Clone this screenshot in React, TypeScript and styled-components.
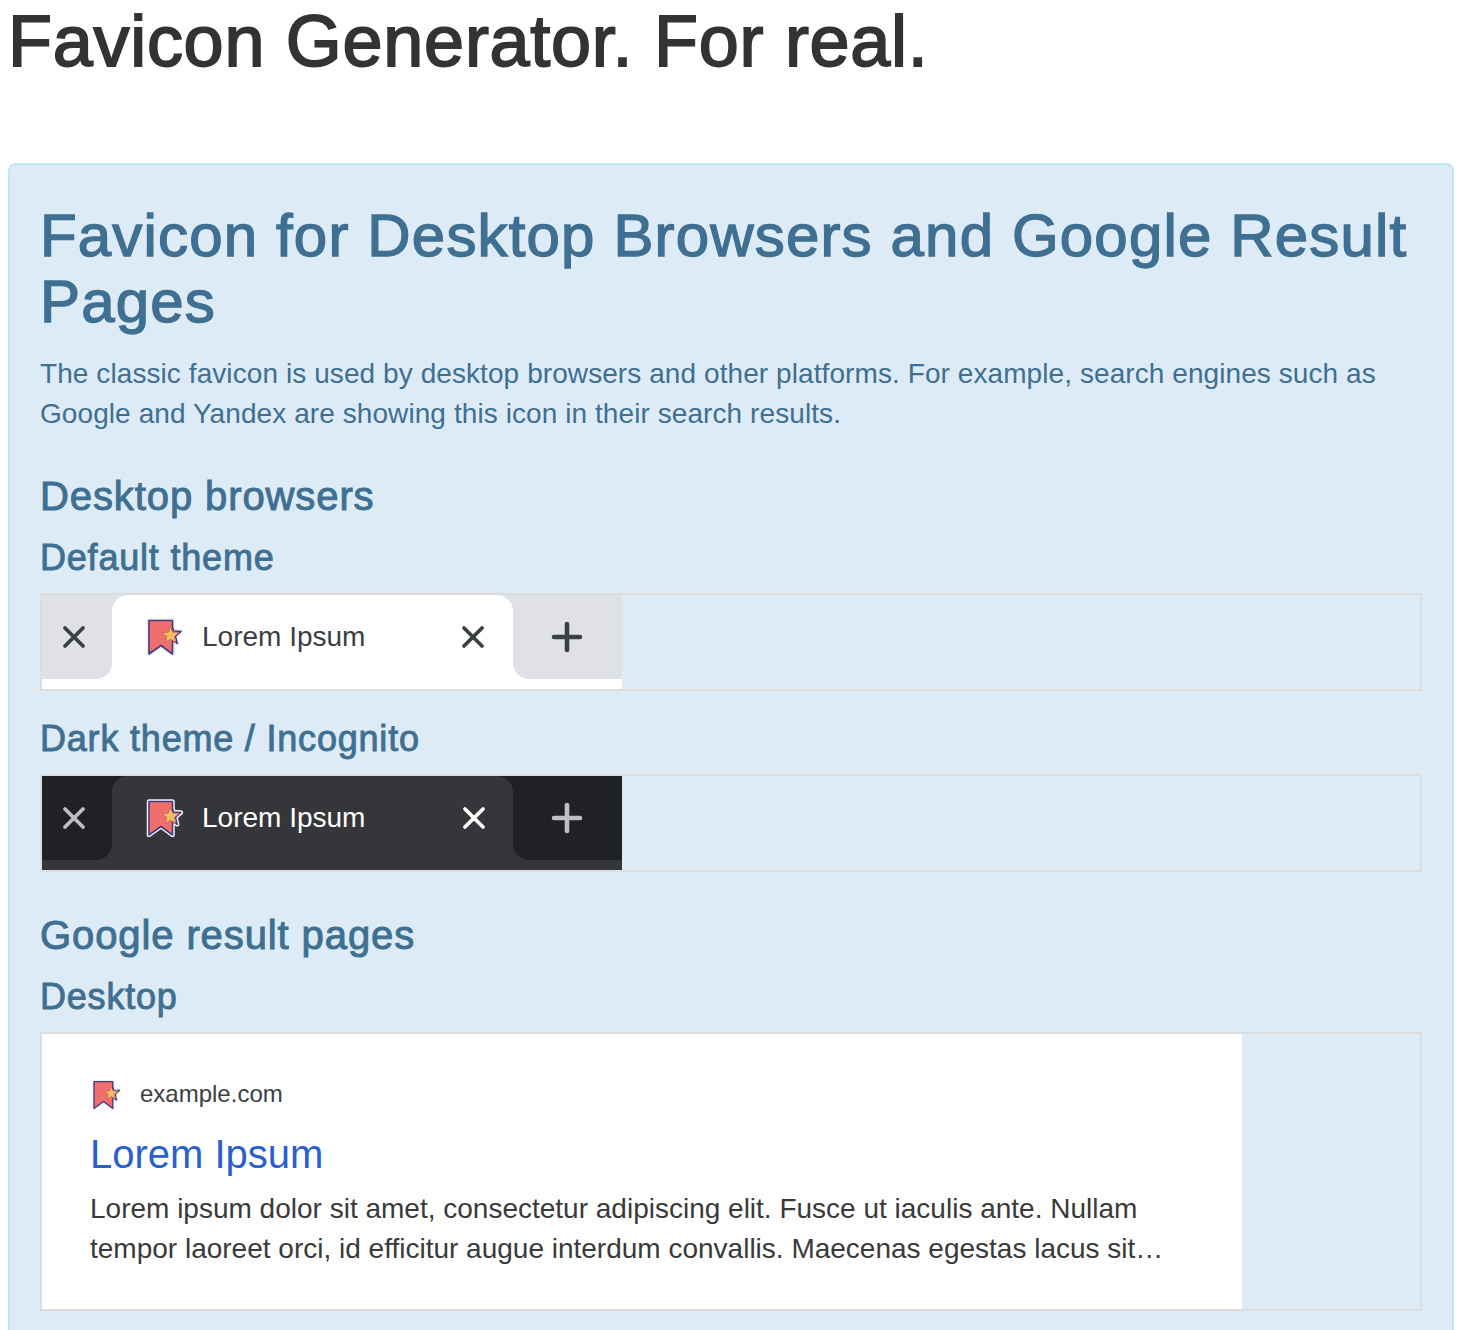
import React from "react";
import styled, { createGlobalStyle } from "styled-components";

const Global = createGlobalStyle`
  html, body { margin: 0; height: 1330px; overflow: hidden; background: #fff; }
  body { font-family: "Liberation Sans", Arial, sans-serif; font-size: 28px; line-height: 40px; color: #333; }
`;

const Page = styled.div`
  padding: 0 4px 0 8px;
`;

const Title = styled.h1`
  margin: 0 0 82px;
  padding-top: 1px;
  font-size: 72px;
  line-height: 80px;
  font-weight: 400;
  color: #333;
  letter-spacing: 0.72px;
  -webkit-text-stroke: 1.8px #333;
`;

const Panel = styled.section`
  border: 2px solid #bce8f1;
  border-radius: 8px;
  background: #ddebf7;
  padding: 38px 30px 80px;
  color: #3f6f91;
`;

const Heading = styled.h2`
  margin: 0 0 19px;
  font-size: 60px;
  line-height: 66px;
  font-weight: 400;
  letter-spacing: 1.16px;
  -webkit-text-stroke: 1.4px #3f6f91;
`;

const Lead = styled.p`
  margin: 0 0 40px;
  letter-spacing: 0.08px;
`;

const SubHeading = styled.h3`
  margin: 0 0 20px;
  font-size: 40px;
  line-height: 44px;
  font-weight: 400;
  letter-spacing: 0.9px;
  -webkit-text-stroke: 1px #3f6f91;
`;

const ThemeHeading = styled.h4`
  margin: 0 0 15px;
  font-size: 36px;
  line-height: 40px;
  font-weight: 400;
  letter-spacing: 0.8px;
  -webkit-text-stroke: 0.9px #3f6f91;
`;

const Frame = styled.div<{ $gap?: number }>`
  border: 2px solid #dddddd;
  margin-bottom: ${(p) => p.$gap ?? 28}px;
`;

const TabStrip = styled.div<{ $dark?: boolean }>`
  display: flex;
  width: 580px;
  height: 94px;
  background: ${(p) => (p.$dark ? "#35363a" : "#fff")};
`;

const Side = styled.div<{ $dark?: boolean; $right?: boolean }>`
  height: 84px;
  width: ${(p) => (p.$right ? 109 : 70)}px;
  display: flex;
  align-items: center;
  justify-content: center;
  padding-right: ${(p) => (p.$right ? 2 : 6)}px;
  box-sizing: border-box;
  background: ${(p) => (p.$dark ? "#202124" : "#dfe1e6")};
  border-radius: ${(p) => (p.$right ? "0 0 0 16px" : "0 0 16px 0")};
  color: ${(p) => (p.$dark ? "#bdbfc3" : "#3c4043")};
`;

const TabSlot = styled.div<{ $dark?: boolean }>`
  width: 401px;
  height: 94px;
  background: ${(p) => (p.$dark ? "#202124" : "#dfe1e6")};
`;

const ActiveTab = styled.div<{ $dark?: boolean }>`
  height: 100%;
  box-sizing: border-box;
  display: flex;
  align-items: flex-start;
  padding: 21px ${(p) => (p.$dark ? 27 : 28)}px 0 32px;
  border-radius: 16px 16px 0 0;
  background: ${(p) => (p.$dark ? "#35363a" : "#fff")};
  color: ${(p) => (p.$dark ? "#fff" : "#3c4043")};
`;

const TabLabel = styled.span`
  flex: 1;
  margin-left: 18px;
  padding-top: 1px;
  line-height: 40px;
`;

const TabClose = styled.span`
  display: flex;
  height: 42px;
  align-items: center;
`;

const Card = styled.article`
  width: 1200px;
  height: 275px;
  box-sizing: border-box;
  background: #fff;
  padding: 40px 48px 0;
  color: #3a3a3a;
`;

const SourceRow = styled.div`
  display: flex;
  align-items: center;
  height: 40px;
  gap: 18px;
  font-size: 24px;
  color: #3c4043;
`;

const ResultTitle = styled.a`
  display: block;
  margin-top: 15px;
  font-size: 40px;
  line-height: 50px;
  color: #2b5fd0;
`;

const Snippet = styled.p`
  margin: 10px 0 0;
  width: 1100px;
`;

const CloseIcon = () => (
  <svg width="24" height="24" viewBox="0 0 24 24" fill="none" stroke="currentColor" strokeWidth="3.8" strokeLinecap="round">
    <path d="M3 3L21 21M21 3L3 21" />
  </svg>
);

const PlusIcon = () => (
  <svg width="32" height="32" viewBox="0 0 32 32" fill="none" stroke="currentColor" strokeWidth="4.6" strokeLinecap="round">
    <path d="M16 3V29M3 16H29" />
  </svg>
);

const MARK = "M5 4.5H28.5V38L17 29.5L5 38Z";
const STAR = "M27 8L29.8 15L37 15.5L31.5 20.2L33.2 27.4L27 23.6L20.8 27.4L22.5 20.2L17 15.5L24.2 15Z";
const INNER_STAR = "M26.5 10.5L28.8 16.2L35 16.6L30.2 20.5L31.7 26.4L26.5 23.2L21.3 26.4L22.8 20.5L18 16.6L24.2 16.2Z";

const Favicon = ({ size = 40, halo = 4.5, haloColor = "#e8eaf0" }: { size?: number; halo?: number; haloColor?: string }) => (
  <svg width={size} height={size} viewBox="0 0 40 40" strokeLinejoin="round">
    <path d={MARK} fill={haloColor} stroke={haloColor} strokeWidth={halo} />
    <path d={STAR} fill={haloColor} stroke={haloColor} strokeWidth={halo} />
    <path d={STAR} fill="#e9e8f1" stroke="#473a80" strokeWidth="1.5" />
    <path d={MARK} fill="#f06e6b" stroke="#473a80" strokeWidth="1.6" />
    <path d={INNER_STAR} fill="#f6bd5f" stroke="#c0625a" strokeWidth="0.8" />
  </svg>
);

const BrowserTabs = ({ dark }: { dark?: boolean }) => (
  <TabStrip $dark={dark}>
    <Side $dark={dark}>
      <CloseIcon />
    </Side>
    <TabSlot $dark={dark}>
      <ActiveTab $dark={dark}>
        <Favicon haloColor={dark ? "#f4f4f8" : "#e8eaf0"} />
        <TabLabel>Lorem Ipsum</TabLabel>
        <TabClose>
          <CloseIcon />
        </TabClose>
      </ActiveTab>
    </TabSlot>
    <Side $dark={dark} $right>
      <PlusIcon />
    </Side>
  </TabStrip>
);

export default function App() {
  return (
    <Page>
      <Global />
      <Title>Favicon Generator. For real.</Title>
      <Panel>
        <Heading>Favicon for Desktop Browsers and Google Result Pages</Heading>
        <Lead>
          The classic favicon is used by desktop browsers and other platforms. For example, search engines such as
          Google and Yandex are showing this icon in their search results.
        </Lead>
        <SubHeading>Desktop browsers</SubHeading>
        <ThemeHeading>Default theme</ThemeHeading>
        <Frame>
          <BrowserTabs />
        </Frame>
        <ThemeHeading>Dark theme / Incognito</ThemeHeading>
        <Frame $gap={41}>
          <BrowserTabs dark />
        </Frame>
        <SubHeading>Google result pages</SubHeading>
        <ThemeHeading>Desktop</ThemeHeading>
        <Frame>
          <Card>
            <SourceRow>
              <Favicon size={32} halo={3.5} />
              example.com
            </SourceRow>
            <ResultTitle>Lorem Ipsum</ResultTitle>
            <Snippet>
              Lorem ipsum dolor sit amet, consectetur adipiscing elit. Fusce ut iaculis ante. Nullam tempor laoreet
              orci, id efficitur augue interdum convallis. Maecenas egestas lacus sit…
            </Snippet>
          </Card>
        </Frame>
      </Panel>
    </Page>
  );
}
